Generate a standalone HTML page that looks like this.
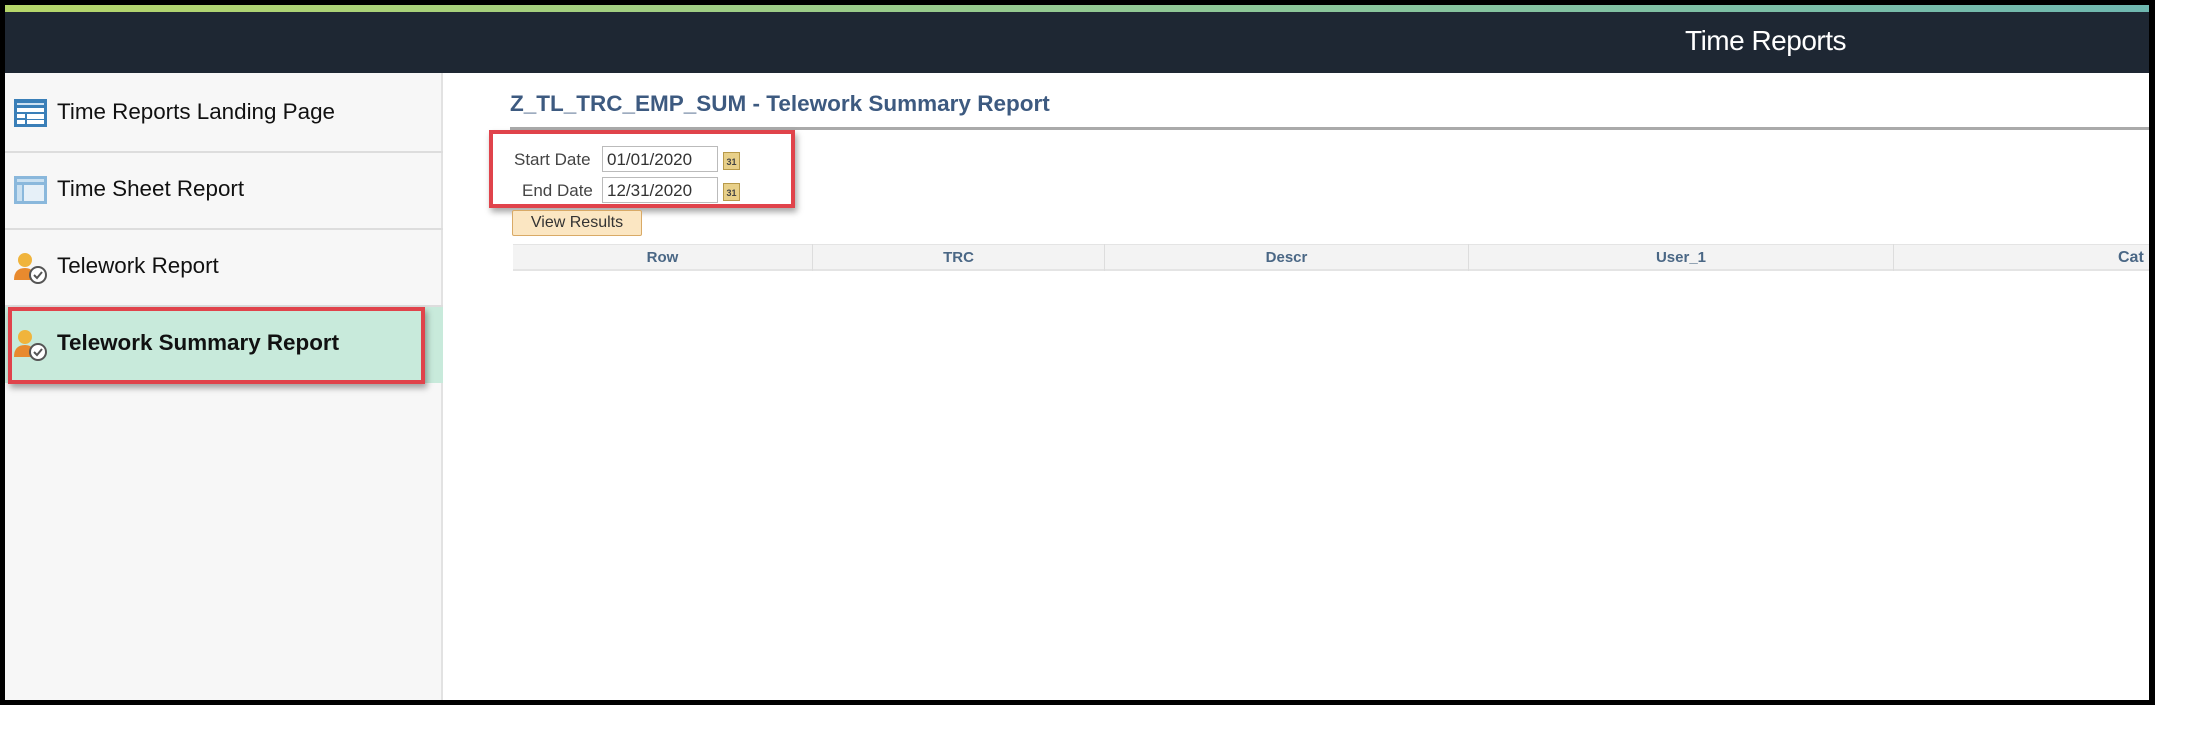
<!DOCTYPE html>
<html><head><meta charset="utf-8"><style>
*{margin:0;padding:0;box-sizing:border-box}
body{width:2186px;height:733px;background:#fff;position:relative;overflow:hidden;font-family:"Liberation Sans",Arial,sans-serif}
.a{position:absolute}
.item{position:absolute;left:57px;font-size:22.4px;color:#111}
.sep{position:absolute;left:5px;width:438px;height:2px;background:#ddd}
.th{position:absolute;top:244px;height:27px;line-height:27px;text-align:center;font-size:15px;font-weight:bold;color:#4a6785;border-right:1px solid #ddd}
</style></head><body>
<div class="a" style="left:0;top:0;width:2155px;height:705px;background:#000"></div>
<div class="a" style="left:5px;top:5px;width:2144px;height:695px;background:#fff"></div>
<div class="a" style="left:5px;top:5px;width:2144px;height:7px;background:linear-gradient(90deg,#b6d66a,#8cc79a 60%,#6fb8b0)"></div>
<div class="a" style="left:5px;top:12px;width:2144px;height:61px;background:#1e2733"></div>
<div class="a" style="left:1685px;top:25px;font-size:28px;color:#fff;letter-spacing:-0.5px">Time Reports</div>
<div class="a" style="left:5px;top:73px;width:438px;height:627px;background:#f7f7f7;border-right:2px solid #e2e2e2"></div>
<div class="sep" style="top:151px"></div>
<div class="sep" style="top:228px"></div>
<div class="sep" style="top:305px"></div>
<div class="a" style="left:5px;top:307px;width:438px;height:76px;background:#c8eadb"></div>
<svg class="a" style="left:14px;top:99px" width="33" height="28" viewBox="0 0 33 28"><rect x="0" y="0" width="33" height="28" fill="#3a7fb8"/><rect x="3" y="4" width="27" height="2" fill="#cfe2f2"/><rect x="3" y="9" width="27" height="4" fill="#fff"/><rect x="3" y="15" width="8" height="4" fill="#fff"/><rect x="13" y="15" width="17" height="10" fill="#fff"/><rect x="3" y="21" width="8" height="4" fill="#fff"/><rect x="13" y="20" width="17" height="1" fill="#3a7fb8"/></svg>
<div class="item" style="top:99px">Time Reports Landing Page</div>
<svg class="a" style="left:14px;top:176px" width="33" height="28" viewBox="0 0 33 28"><rect width="33" height="28" fill="#8ab8dc"/><rect x="3" y="3" width="27" height="3" fill="#c9e0f1"/><rect x="3" y="9" width="5" height="16" fill="#c9e0f1"/><rect x="10" y="9" width="20" height="16" fill="#e6f0f8"/></svg>
<div class="item" style="top:176px">Time Sheet Report</div>
<svg class="a" style="left:13px;top:252px" width="34" height="32" viewBox="0 0 34 32"><circle cx="12" cy="8" r="7" fill="#f0b43c"/><path d="M1 28 Q1 16 12 16 Q22 16 22 28Z" fill="#e88a2e"/><circle cx="25" cy="23" r="8" fill="#fff" stroke="#555" stroke-width="2"/><path d="M21 23 l3 3 5-6" fill="none" stroke="#555" stroke-width="2"/></svg>
<div class="item" style="top:253px">Telework Report</div>
<svg class="a" style="left:13px;top:329px" width="34" height="32" viewBox="0 0 34 32"><circle cx="12" cy="8" r="7" fill="#f0b43c"/><path d="M1 28 Q1 16 12 16 Q22 16 22 28Z" fill="#e88a2e"/><circle cx="25" cy="23" r="8" fill="#fff" stroke="#555" stroke-width="2"/><path d="M21 23 l3 3 5-6" fill="none" stroke="#555" stroke-width="2"/></svg>
<div class="item" style="top:330px;font-weight:bold;font-size:22.4px">Telework Summary Report</div>
<div class="a" style="left:8px;top:307px;width:417px;height:77px;border:4px solid #e0434b;box-shadow:2px 4px 6px rgba(0,0,0,.35)"></div>
<div class="a" style="left:510px;top:91px;font-size:22.5px;font-weight:bold;color:#3d5a80">Z_TL_TRC_EMP_SUM - Telework Summary Report</div>
<div class="a" style="left:510px;top:127px;width:1639px;height:3px;background:#aaa"></div>
<div class="a" style="left:514px;top:150px;font-size:17px;color:#444">Start Date</div>
<div class="a" style="left:602px;top:146px;width:116px;height:26px;border:1px solid #bbb;font-size:17px;color:#333;padding:3px 4px">01/01/2020</div>
<div class="a" style="left:522px;top:181px;font-size:17px;color:#444">End Date</div>
<div class="a" style="left:602px;top:177px;width:116px;height:26px;border:1px solid #bbb;font-size:17px;color:#333;padding:3px 4px">12/31/2020</div>
<div class="a" style="left:723px;top:152px;width:17px;height:18px;background:#e8d089;border:1px solid #b89a4a;font-size:9px;font-weight:bold;color:#444;text-align:center;line-height:18px">31</div>
<div class="a" style="left:723px;top:183px;width:17px;height:18px;background:#e8d089;border:1px solid #b89a4a;font-size:9px;font-weight:bold;color:#444;text-align:center;line-height:18px">31</div>
<div class="a" style="left:489px;top:130px;width:306px;height:78px;border:4px solid #e0434b;box-shadow:2px 4px 6px rgba(0,0,0,.35)"></div>
<div class="a" style="left:512px;top:210px;width:130px;height:26px;background:#fbe6c2;border:1px solid #d9aa66;border-radius:2px;font-size:16px;color:#333;text-align:center;line-height:24px">View Results</div>
<div class="a" style="left:513px;top:244px;width:1636px;height:27px;background:#f3f3f3;border-top:1px solid #e4e4e4;border-bottom:2px solid #e4e4e4"></div>
<div class="th" style="left:513px;width:300px">Row</div>
<div class="th" style="left:813px;width:292px">TRC</div>
<div class="th" style="left:1105px;width:364px">Descr</div>
<div class="th" style="left:1469px;width:425px">User_1</div>
<div class="a" style="left:2118px;top:244px;height:27px;line-height:27px;font-size:16px;font-weight:bold;color:#4a6785">Cat</div>
<div class="a" style="left:2149px;top:0;width:6px;height:705px;background:#000"></div>
</body></html>
